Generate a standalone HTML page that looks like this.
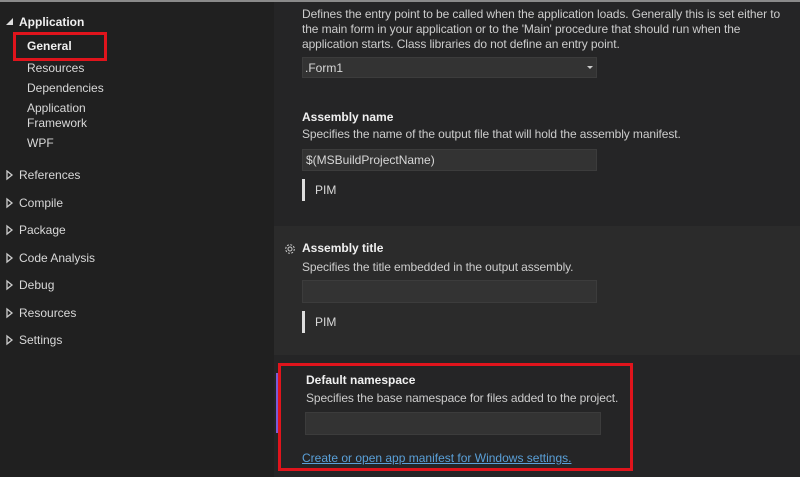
<!DOCTYPE html>
<html><head><style>
*{margin:0;padding:0;box-sizing:border-box}
body{width:800px;height:477px;overflow:hidden;background:#252526;font-family:"Liberation Sans",sans-serif;font-size:12px;color:#d8d8d8;position:relative}
.a{position:absolute;white-space:nowrap}
.sb{position:absolute;left:0;top:0;width:274px;height:477px;background:#202020}
.b{font-weight:bold;color:#f0f0f0}
.in{position:absolute;background:#333;border:1px solid #3c3c3c}
.d{color:#ccc;letter-spacing:-0.1px}
</style></head><body>
<div class="sb"></div>
<div class="a" style="left:0;top:0;width:800px;height:2px;background:#8a8a8a"></div>
<div class="a" style="left:274px;top:226px;width:526px;height:129px;background:#2b2b2b"></div>
<div class="a" style="left:6px;top:18px;width:0;height:0;border-left:7px solid transparent;border-bottom:7px solid #ddd"></div>
<div class="a b" style="left:19px;top:15px">Application</div>
<div class="a b" style="left:27px;top:39px">General</div>
<div class="a" style="left:13px;top:32px;width:94px;height:29px;border:3px solid #e0141c"></div>
<div class="a" style="left:27px;top:61px">Resources</div>
<div class="a" style="left:27px;top:81px">Dependencies</div>
<div class="a" style="left:27px;top:101px">Application</div>
<div class="a" style="left:27px;top:116px">Framework</div>
<div class="a" style="left:27px;top:136px">WPF</div>
<div class="a" style="left:19px;top:168px">References</div>
<div class="a" style="left:19px;top:196px">Compile</div>
<div class="a" style="left:19px;top:223px">Package</div>
<div class="a" style="left:19px;top:251px">Code Analysis</div>
<div class="a" style="left:19px;top:278px">Debug</div>
<div class="a" style="left:19px;top:306px">Resources</div>
<div class="a" style="left:19px;top:333px">Settings</div>
<svg class="a" style="left:6px;top:170px" width="8" height="180" fill="none" stroke="#ccc" stroke-width="1.3">
<path d="M1 1L6 5L1 9Z"/><path transform="translate(0,28)" d="M1 1L6 5L1 9Z"/><path transform="translate(0,55)" d="M1 1L6 5L1 9Z"/><path transform="translate(0,83)" d="M1 1L6 5L1 9Z"/><path transform="translate(0,110)" d="M1 1L6 5L1 9Z"/><path transform="translate(0,138)" d="M1 1L6 5L1 9Z"/><path transform="translate(0,165)" d="M1 1L6 5L1 9Z"/></svg>

<div class="a d" style="left:302px;top:7px;line-height:15px">Defines the entry point to be called when the application loads. Generally this is set either to<br>the main form in your application or to the 'Main' procedure that should run when the<br>application starts. Class libraries do not define an entry point.</div>
<div class="in" style="left:302px;top:57px;width:295px;height:21px"></div>
<div class="a" style="left:305px;top:61px">.Form1</div>
<div class="a" style="left:587px;top:66px;border-left:3px solid transparent;border-right:3px solid transparent;border-top:3px solid #ccc"></div>

<div class="a b" style="left:302px;top:110px">Assembly name</div>
<div class="a d" style="left:302px;top:127px">Specifies the name of the output file that will hold the assembly manifest.</div>
<div class="in" style="left:302px;top:149px;width:295px;height:22px"></div>
<div class="a" style="left:306px;top:153px">$(MSBuildProjectName)</div>
<div class="a" style="left:302px;top:179px;width:3px;height:22px;background:#ddd"></div>
<div class="a" style="left:315px;top:183px">PIM</div>

<svg class="a" style="left:284px;top:243px" width="12" height="12" viewBox="0 0 12 12" fill="none" stroke="#ccc" stroke-width="1"><circle cx="6" cy="6" r="2"/><circle cx="6" cy="6" r="4.3" stroke-dasharray="2 1.4"/></svg>
<div class="a b" style="left:302px;top:241px">Assembly title</div>
<div class="a d" style="left:302px;top:260px">Specifies the title embedded in the output assembly.</div>
<div class="in" style="left:302px;top:280px;width:295px;height:23px"></div>
<div class="a" style="left:302px;top:311px;width:3px;height:22px;background:#ddd"></div>
<div class="a" style="left:315px;top:315px">PIM</div>

<div class="a" style="left:276px;top:373px;width:2px;height:60px;background:#7a5cd6"></div>
<div class="a" style="left:278px;top:363px;width:355px;height:108px;border:3px solid #e0141c"></div>
<div class="a b" style="left:306px;top:373px">Default namespace</div>
<div class="a d" style="left:306px;top:391px">Specifies the base namespace for files added to the project.</div>
<div class="in" style="left:305px;top:412px;width:296px;height:23px"></div>
<div class="a" style="left:302px;top:451px;color:#5aa0d8;text-decoration:underline">Create or open app manifest for Windows settings.</div>
</body></html>
